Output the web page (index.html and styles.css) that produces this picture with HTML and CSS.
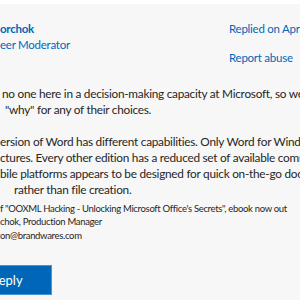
FILE: index.html
```html
<!DOCTYPE html>
<html lang="en">
<head>
    <meta charset="UTF-8">
    <meta name="viewport" content="width=device-width, initial-scale=1.0">
    <title>Reply</title>

    <link rel="stylesheet" href="styles.css">
</head>
<body>

    <div class="reply-card">
        <div class="reply-header">
            <div class="author">
                <div class="author-name">orchok</div>
                <div class="author-role">eer Moderator</div>
            </div>
            <div class="reply-meta">
                <div class="meta-link">Replied on April</div>
                <div class="meta-link">Report abuse</div>
            </div>
        </div>

        <div class="reply-body">
            <p class="para">
                <span class="line indent-1">no one here in a decision-making capacity at Microsoft, so we can't</span>
                <span class="line indent-2">"why" for any of their choices.</span>
            </p>
            <p class="para">
                <span class="line">ersion of Word has different capabilities. Only Word for Windows</span>
                <span class="line">ctures. Every other edition has a reduced set of available commands</span>
                <span class="line">bile platforms appears to be designed for quick on-the-go document</span>
                <span class="line indent-3">rather than file creation.</span>
            </p>
        </div>

        <!-- signature -->
        <div class="signature">
            <span class="line">f "OOXML Hacking - Unlocking Microsoft Office's Secrets", ebook now out</span>
            <span class="line">chok, Production Manager</span>
            <span class="line">on@brandwares.com</span>
        </div>

        <button type="button" class="reply-button">Reply</button>
    </div>

</body>
</html>
```

FILE: styles.css
```css
body {
    font-family: 'Lato', 'Open Sans', sans-serif;
    margin: 0;
    padding: 0;
    background-color: #fff;
    overflow: hidden;
}

.reply-card {
    margin-top: 4px;
    background-color: #f7f7f7;
    height: 296px;
    padding-top: 17px;
    box-sizing: border-box;
    color: #262626;
}

.reply-header {
    display: flex;
    justify-content: space-between;
    font-size: 11.5px;
    line-height: 16px;
    letter-spacing: -0.25px;
}

.author-name {
    font-weight: bold;
    color: #0067b8;
}

.author-role {
    color: #0067b8;
}

.reply-meta {
    width: 71px;
    display: flex;
    flex-direction: column;
    gap: 13px;
    white-space: nowrap;
    overflow: hidden;
}

.meta-link {
    color: #0067b8;
}

.reply-body {
    margin-top: 20px;
    font-size: 11.8px;
    line-height: 16.3px;
    letter-spacing: -0.26px;
}

.para {
    margin: 0 0 15px;
}

.para:last-child {
    margin-bottom: 0;
}

.line {
    display: block;
    white-space: nowrap;
}

.indent-1 {
    padding-left: 2px;
}

.indent-2 {
    padding-left: 5px;
}

.indent-3 {
    padding-left: 14px;
}

.signature {
    font-size: 9.5px;
    line-height: 13.5px;
    letter-spacing: -0.32px;
    margin-top: 3px;
}

.reply-button {
    display: block;
    margin-top: 23px;
    width: 52px;
    height: 30px;
    padding: 0;
    background-color: #0067b8;
    color: #fff;
    border: 1px solid #4d95d0;
    border-left: none;
    font-family: inherit;
    font-size: 13px;
    text-align: left;
    text-indent: -9px;
    overflow: hidden;
}
```
